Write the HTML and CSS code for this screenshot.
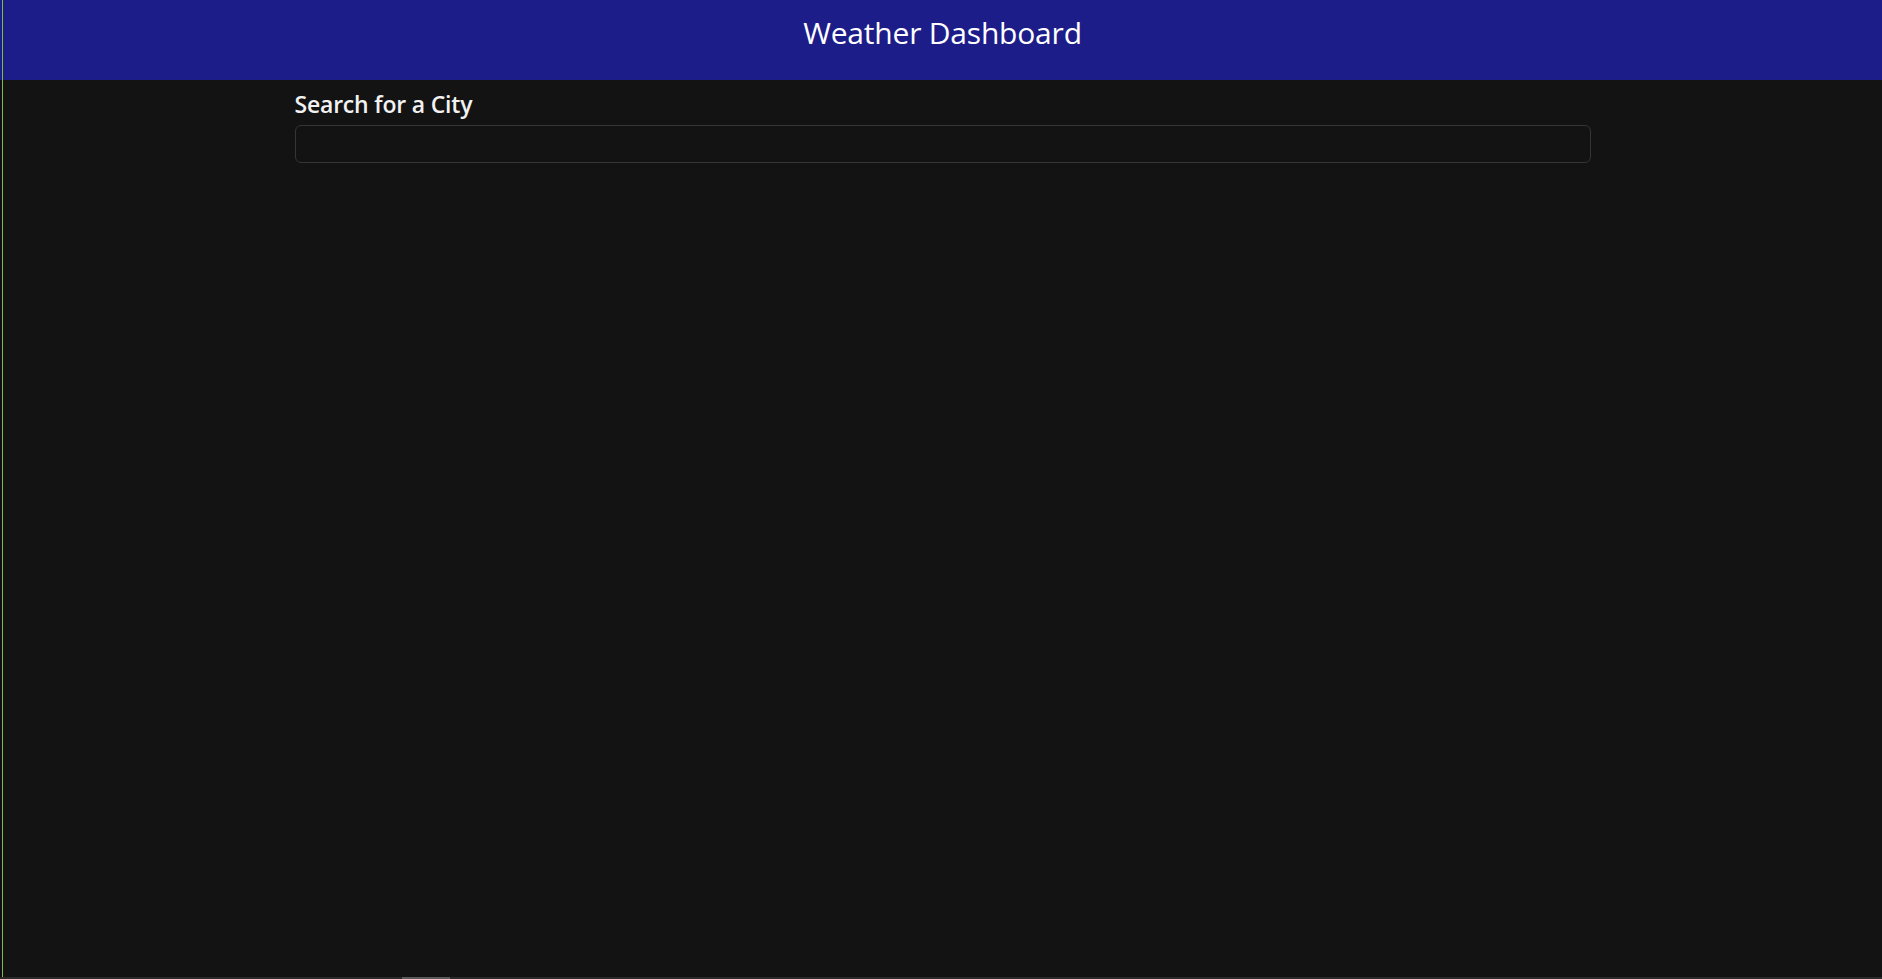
FILE: index.html
```html
<!DOCTYPE html>
<html lang="en">
<head>
<meta charset="utf-8">
<title>Weather Dashboard</title>
<link rel="stylesheet" href="styles.css">
</head>
<body>
<div class="frame">
  <div class="edge"></div>
  <div class="app">
    <header class="topbar">
      <h1 class="title">Weather Dashboard</h1>
    </header>
    <main class="container">
      <label class="search-label" for="city">Search for a City</label>
      <input class="search-input" id="city" type="text">
    </main>
  </div>
</div>
<div class="hscroll"><div class="hthumb"></div></div>
</body>
</html>
```

FILE: styles.css
```css
* { box-sizing: border-box; }
html, body {
  margin: 0;
  padding: 0;
  height: 100%;
  background: #131313;
  overflow: hidden;
}
body {
  font-family: "Open Sans", "Noto Sans", sans-serif;
  color: #f2f2f2;
}
.frame {
  display: flex;
  height: 100%;
}
.edge {
  width: 3px;
  flex: none;
  border-right: 1px solid #7cbf3c;
  background: linear-gradient(#1d1d8a 0, #1d1d8a 80px, #100d18 80px);
}
.app {
  flex: 1;
  display: flex;
  flex-direction: column;
}
.topbar {
  height: 80px;
  background: #1d1d8a;
  display: flex;
  align-items: center;
  justify-content: center;
  padding-bottom: 14px;
}
.title {
  margin: 0;
  font-weight: 400;
  font-size: 30px;
  line-height: 40px;
  color: #ffffff;
  letter-spacing: -0.2px;
}
.container {
  width: 1320px;
  margin: 0 auto;
  padding: 9px 12px 0;
  display: flex;
  flex-direction: column;
}
.search-label {
  font-size: 23px;
  font-weight: 600;
  line-height: 30px;
  margin-bottom: 6px;
  letter-spacing: -0.2px;
}
.search-input {
  height: 38px;
  width: 100%;
  background: #131313;
  border: 1px solid #353535;
  border-radius: 6px;
  color: #f2f2f2;
  font-family: inherit;
  font-size: 16px;
  padding: 6px 12px;
  outline: none;
}
.hscroll {
  position: fixed;
  left: 0;
  right: 0;
  bottom: 0;
  height: 2px;
  background: #2a2a2a;
}
.hthumb {
  position: absolute;
  left: 402px;
  width: 48px;
  top: 0;
  bottom: 0;
  background: #5a5a5a;
}
```
